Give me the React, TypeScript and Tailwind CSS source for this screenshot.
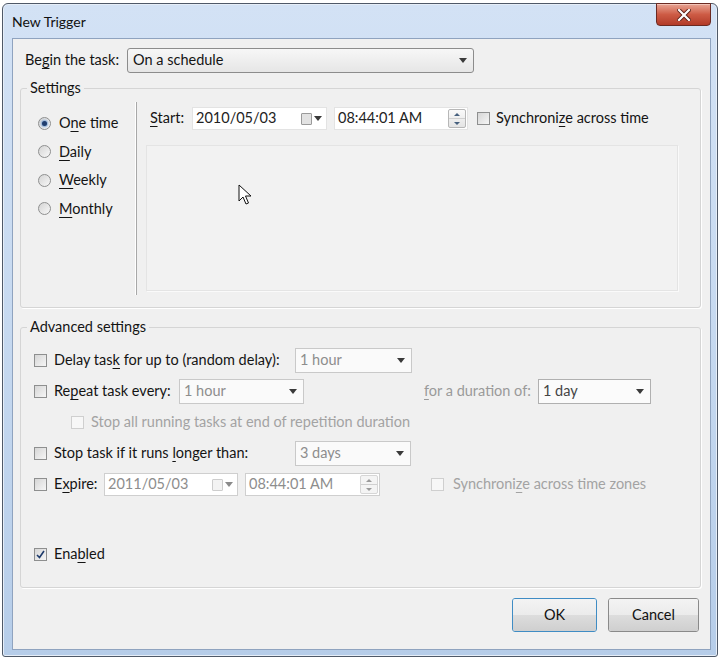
import React from "react";

const Arrow = ({ dim = false }: { dim?: boolean }) => (
  <svg width="8" height="5" viewBox="0 0 8 5" className="shrink-0">
    <path d="M0 0 H8 L4 5 Z" fill={dim ? "#8a8a8a" : "#3a3a3a"} />
  </svg>
);

const U = ({ children }: { children: React.ReactNode }) => (
  <span className="underline decoration-1 underline-offset-[3px]">{children}</span>
);

function Check({ checked = false, disabled = false }: { checked?: boolean; disabled?: boolean }) {
  return (
    <div
      className={
        "w-[13px] h-[13px] shrink-0 border flex items-center justify-center " +
        (disabled
          ? "border-[#cfcfcf] bg-[#f7f7f7]"
          : "border-[#8e8f8f] bg-gradient-to-br from-[#d6d6d6] to-[#f6f6f6]")
      }
    >
      {checked && (
        <svg width="9" height="9" viewBox="0 0 9 9">
          <path d="M1 5 L3.5 7.5 L8 1" fill="none" stroke="#1d3a6b" strokeWidth="1.6" />
        </svg>
      )}
    </div>
  );
}

function Radio({ checked = false }: { checked?: boolean }) {
  return (
    <div className="w-[13px] h-[13px] shrink-0 rounded-full border border-[#8e8f8f] bg-gradient-to-br from-[#d4d4d4] to-[#f8f8f8] flex items-center justify-center">
      {checked && <div className="w-[5px] h-[5px] rounded-full bg-[#1f3d6e] shadow-[0_0_2px_1px_#7fa6d6]" />}
    </div>
  );
}

function Combo({
  value,
  w,
  dim = false,
  dark = false,
}: {
  value: string;
  w: string;
  dim?: boolean;
  dark?: boolean;
}) {
  return (
    <div
      className={
        w +
        " h-[25px] shrink-0 flex items-center justify-between pl-[4px] pr-[6px] border " +
        (dim
          ? "border-[#c9c9c9] bg-[#fafafa] text-[#8d8d8d]"
          : "border-[#b0b0b0] bg-[#fbfbfb] text-[#6a6a6a]") +
        (dark ? " !text-[#444]" : "")
      }
    >
      <span>{value}</span>
      <Arrow />
    </div>
  );
}

function DateBox({ value, w, dim = false }: { value: string; w: string; dim?: boolean }) {
  return (
    <div
      className={
        w +
        " h-[23px] shrink-0 flex items-center justify-between pl-[3px] pr-[4px] bg-white border " +
        (dim ? "border-[#cfcfcf] text-[#8d8d8d]" : "border-[#e3e3e3] text-[#222]")
      }
    >
      <span>{value}</span>
      <div className="flex items-center gap-[2px]">
        <div
          className={
            "w-[11px] h-[12px] rounded-[1px] border " +
            (dim ? "border-[#cdcdcd] bg-[#f3f3f3]" : "border-[#9a9a9a] bg-[#e2e2e2]")
          }
        />
        <Arrow dim={dim} />
      </div>
    </div>
  );
}

function TimeBox({ value, w, dim = false }: { value: string; w: string; dim?: boolean }) {
  return (
    <div
      className={
        w +
        " h-[23px] shrink-0 flex items-center justify-between pl-[3px] pr-[1px] bg-white border " +
        (dim ? "border-[#cfcfcf] text-[#8d8d8d]" : "border-[#e3e3e3] text-[#222]")
      }
    >
      <span>{value}</span>
      <div
        className={
          "w-[18px] h-[19px] flex flex-col border rounded-[2px] " +
          (dim ? "border-[#d6d6d6] bg-[#f4f4f4]" : "border-[#b7b7b7] bg-gradient-to-b from-[#fafafa] to-[#e4e4e4]")
        }
      >
        <div className="flex-1 flex items-center justify-center border-b border-[#d0d0d0]">
          <svg width="6" height="3" viewBox="0 0 6 3">
            <path d="M0 3 H6 L3 0 Z" fill={dim ? "#9a9a9a" : "#46607e"} />
          </svg>
        </div>
        <div className="flex-1 flex items-center justify-center">
          <svg width="6" height="3" viewBox="0 0 6 3">
            <path d="M0 0 H6 L3 3 Z" fill={dim ? "#9a9a9a" : "#46607e"} />
          </svg>
        </div>
      </div>
    </div>
  );
}

function Button({ label, w, focus = false }: { label: string; w: string; focus?: boolean }) {
  return (
    <div
      className={
        w +
        " h-[34px] rounded-[3px] border flex flex-col overflow-hidden text-[#111] relative " +
        (focus ? "border-[#3f8cc4] shadow-[inset_0_0_0_1px_#9fd4f3]" : "border-[#8a8a8a] shadow-[inset_0_0_0_1px_#fbfbfb]")
      }
    >
      <div className="h-1/2 bg-gradient-to-b from-[#f3f3f3] to-[#ebebeb]" />
      <div className="h-1/2 bg-gradient-to-b from-[#dddddd] to-[#cfcfcf]" />
      <span className="absolute inset-0 flex items-center justify-center">{label}</span>
    </div>
  );
}

const radios = [
  { pre: "O", key: "n", post: "e time", on: true },
  { pre: "", key: "D", post: "aily", on: false },
  { pre: "", key: "W", post: "eekly", on: false },
  { pre: "", key: "M", post: "onthly", on: false },
];

export default function App() {
  return (
    <div className="w-[726px] h-[662px] bg-white overflow-hidden font-['Segoe_UI',Lato,sans-serif] text-[14.5px] leading-none text-[#141414]">
      {/* window frame */}
      <div className="ml-[2px] mt-[3px] w-[716px] h-[654px] rounded-t-[6px] rounded-b-[3px] border border-[#4f5968] bg-gradient-to-b from-[#d3e2f5] via-[#c6d9f0] to-[#b6cde9] flex flex-col shadow-[inset_0_0_0_1px_#e6eef8]">
        {/* title bar */}
        <div className="h-[34px] flex items-start justify-between">
          <span className="pl-[9px] pt-[11px] text-[14px] text-[#111]">New Trigger</span>
          <div className="mr-[6px] mt-[-1px] w-[55px] h-[23px] rounded-b-[4px] border border-[#6b2a22] bg-gradient-to-b from-[#e7a393] via-[#cd5b45] to-[#b23a28] flex items-center justify-center shadow-[inset_0_1px_0_#f3c4b8]">
            <svg width="14" height="12" viewBox="0 0 14 12">
              <path d="M2 1 L12 11 M12 1 L2 11" stroke="#5a1f17" strokeWidth="4" strokeLinecap="square" />
              <path d="M2 1 L12 11 M12 1 L2 11" stroke="#ffffff" strokeWidth="2.2" strokeLinecap="square" />
            </svg>
          </div>
        </div>

        {/* client area */}
        <div className="ml-[9px] w-[699px] h-[612px] border border-[#8fa3bf] bg-[#f0f0f0] pt-[9px] px-[7px] flex flex-col">
          {/* begin the task */}
          <div className="flex items-center">
            <span className="ml-[5px] w-[102px]">
              Be<U>g</U>in the task:
            </span>
            <div className="w-[347px] h-[25px] rounded-[3px] border border-[#8c8c8c] bg-gradient-to-b from-[#f7f7f7] to-[#e6e6e6] flex items-center justify-between pl-[5px] pr-[6px]">
              <span>On a schedule</span>
              <Arrow />
            </div>
          </div>

          {/* Settings group */}
          <fieldset className="mt-[6px] w-[681px] border border-[#d5d5d5] rounded-[3px] shadow-[1px_1px_0_#ffffff] pb-[12px]">
            <legend className="ml-[6px] px-[3px] h-[18px] leading-[18px]">Settings</legend>
            <div className="flex h-[198px]">
              <div className="w-[115px] pl-[17px] pt-[12px] flex flex-col">
                {radios.map((r) => (
                  <div key={r.key} className="h-[28.5px] flex items-center gap-[8px]">
                    <Radio checked={r.on} />
                    <span>
                      {r.pre}
                      <U>{r.key}</U>
                      {r.post}
                    </span>
                  </div>
                ))}
              </div>
              <div className="mt-[5px] h-[193px] flex-1 border-l border-[#a8a8a8] shadow-[-1px_0_0_#ffffff] flex flex-col">
                <div className="mt-[5px] pl-[13px] flex items-center">
                  <span className="w-[42px]">
                    <U>S</U>tart:
                  </span>
                  <DateBox value="2010/05/03" w="w-[135px]" />
                  <div className="w-[7px]" />
                  <TimeBox value="08:44:01 AM" w="w-[134px]" />
                  <div className="ml-[9px]">
                    <Check />
                  </div>
                  <span className="ml-[6px]">
                    Synchroni<U>z</U>e across time
                  </span>
                </div>
                <div className="relative mt-[15px] ml-[9px] w-[532px] h-[146px] border border-[#e4e4e4] bg-[#f2f2f2] shadow-[1px_1px_0_#fafafa]">
                  {/* mouse pointer */}
                  <svg width="14" height="22" viewBox="0 0 14 22" className="absolute left-[91px] top-[38px]">
                    <path
                      d="M1 1 V17 L5 13 L8 20 L10.5 19 L7.5 12 H13 Z"
                      fill="#ffffff"
                      stroke="#111111"
                      strokeWidth="1"
                      strokeLinejoin="round"
                    />
                  </svg>
                </div>
              </div>
            </div>
          </fieldset>

          {/* Advanced settings group */}
          <fieldset className="mt-[10px] w-[681px] border border-[#d5d5d5] rounded-[3px] shadow-[1px_1px_0_#ffffff] pb-[17px]">
            <legend className="ml-[6px] px-[3px] h-[18px] leading-[18px]">Advanced settings</legend>
            <div className="pt-[9px] pl-[13px] flex flex-col">
              <div className="h-[31px] flex items-center">
                <div className="w-[261px] flex items-center gap-[7px]">
                  <Check />
                  <span>
                    Delay tas<U>k</U> for up to (random delay):
                  </span>
                </div>
                <Combo value="1 hour" w="w-[117px]" dim />
              </div>
              <div className="h-[31px] flex items-center">
                <div className="w-[145px] flex items-center gap-[7px]">
                  <Check />
                  <span>
                    Re<U>p</U>eat task every:
                  </span>
                </div>
                <Combo value="1 hour" w="w-[125px]" dim />
                <span className="ml-[120px] w-[114px] text-[#9a9a9a]">
                  <U>f</U>or a duration of:
                </span>
                <Combo value="1 day" w="w-[113px]" dark />
              </div>
              <div className="h-[31px] flex items-center pl-[37px] gap-[7px] text-[#a3a3a3]">
                <Check disabled />
                <span>
                  Stop all running tasks at end of repetition durat<U>i</U>on
                </span>
              </div>
              <div className="h-[31px] flex items-center">
                <div className="w-[261px] flex items-center gap-[7px]">
                  <Check />
                  <span>
                    Stop task if it runs <U>l</U>onger than:
                  </span>
                </div>
                <Combo value="3 days" w="w-[116px]" dim />
              </div>
              <div className="h-[31px] flex items-center">
                <div className="w-[70px] flex items-center gap-[7px]">
                  <Check />
                  <span>
                    E<U>x</U>pire:
                  </span>
                </div>
                <DateBox value="2011/05/03" w="w-[134px]" dim />
                <div className="w-[7px]" />
                <TimeBox value="08:44:01 AM" w="w-[135px]" dim />
                <div className="ml-[51px] flex items-center gap-[9px] text-[#a3a3a3]">
                  <Check disabled />
                  <span>
                    Synchroni<U>z</U>e across time zones
                  </span>
                </div>
              </div>
              <div className="mt-[39px] h-[31px] flex items-center gap-[7px]">
                <Check checked />
                <span>
                  Ena<U>b</U>led
                </span>
              </div>
            </div>
          </fieldset>

          {/* buttons */}
          <div className="mt-[10px] w-[681px] pr-[2px] flex justify-end gap-[11px]">
            <Button label="OK" w="w-[85px]" focus />
            <Button label="Cancel" w="w-[91px]" />
          </div>
        </div>
      </div>
    </div>
  );
}
